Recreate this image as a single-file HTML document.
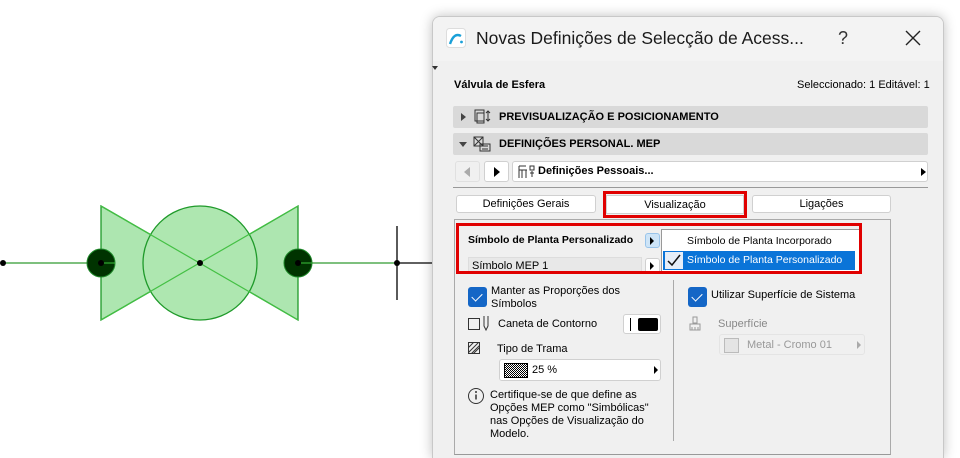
<!DOCTYPE html>
<html><head><meta charset="utf-8"><style>
*{box-sizing:border-box;margin:0;padding:0}
html,body{width:960px;height:458px;overflow:hidden}
body{background:#fff;font-family:"Liberation Sans","DejaVu Sans",sans-serif;font-size:11px;color:#000;position:relative}
.a{position:absolute;white-space:nowrap}
.dlg{position:absolute;left:432px;top:16px;width:512px;height:442px;background:#f0f0f0;border:1px solid #c8c8c8;border-bottom:none;border-radius:8px 8px 0 0;box-shadow:0 0 12px rgba(0,0,0,.25);overflow:hidden}
.bar{position:absolute;left:453px;width:475px;height:22px;background:#d9d9d9;border-radius:2px;font-weight:bold;font-size:11px;line-height:22px}
.btn{position:absolute;background:#fff;border:1px solid #d0d0d0;border-radius:3px}
.cb{position:absolute;width:19px;height:20px;background:#1466c6;border-radius:3px}
.cb:after{content:"";position:absolute;left:6px;top:4px;width:5px;height:9px;border:solid #fff;border-width:0 1.5px 1.5px 0;transform:rotate(45deg)}
.tri{position:absolute;width:0;height:0;border-top:4px solid transparent;border-bottom:4px solid transparent;border-left:5px solid #000}
</style></head><body>
<svg class="a" style="left:0;top:0" width="432" height="458">
<line x1="3" y1="263" x2="432" y2="263" stroke="#000" stroke-width="1.3"/>
<line x1="3" y1="263" x2="101" y2="263" stroke="#3cc03c" stroke-width="1"/>
<line x1="298" y1="263" x2="397" y2="263" stroke="#3cc03c" stroke-width="1"/>
<line x1="397" y1="226" x2="397" y2="300" stroke="#000" stroke-width="1.3"/>
<polygon points="101,206 200,263 101,320" fill="#ade6b0" stroke="#1f9a2a" stroke-width="1.3"/>
<polygon points="298,206 200,263 298,320" fill="#ade6b0" stroke="#1f9a2a" stroke-width="1.3"/>
<circle cx="200" cy="263" r="57" fill="#aee7b0" stroke="#1f9a2a" stroke-width="1.3"/>
<line x1="101" y1="206" x2="298" y2="320" stroke="#44c044" stroke-width="1.2"/>
<line x1="298" y1="206" x2="101" y2="320" stroke="#44c044" stroke-width="1.2"/>
<circle cx="101" cy="263" r="14" fill="#003300" stroke="#1f8a2a"/>
<circle cx="298" cy="263" r="14" fill="#003300" stroke="#1f8a2a"/>
<line x1="101" y1="263" x2="115" y2="263" stroke="#3cc03c"/>
<line x1="298" y1="263" x2="312" y2="263" stroke="#3cc03c"/>
<circle cx="3" cy="263" r="3"/><circle cx="101" cy="263" r="3"/><circle cx="200" cy="263" r="3"/><circle cx="298" cy="263" r="3"/><circle cx="397" cy="263" r="3"/>
</svg>
<div class="dlg"><div style="position:absolute;left:0;top:0;width:100%;height:44px;background:#f3f3f3"></div></div>
<svg class="a" style="left:446px;top:28px" width="20" height="20"><rect x="0.5" y="0.5" width="19" height="19" rx="3" fill="#fff" stroke="#ddd"/><path d="M4 16 Q8 4 15 8" stroke="#1aa0d8" stroke-width="2.4" fill="none"/><circle cx="15.5" cy="14" r="1.4" fill="#1aa0d8"/></svg>
<div class="a" style="left:476px;top:28px;font-size:17.5px;color:#1a1a1a">Novas Definições de Selecção de Acess...</div>
<div class="a" style="left:838px;top:28px;font-size:18px;color:#333">?</div>
<svg class="a" style="left:905px;top:30px" width="16" height="16"><path d="M1 1L15 15M15 1L1 15" stroke="#222" stroke-width="1.4"/></svg>
<div class="a" style="left:432px;top:66px;border-left:3px solid transparent;border-right:3px solid transparent;border-top:4px solid #333"></div>
<div class="a" style="left:454px;top:79px;font-weight:bold;font-size:11px">Válvula de Esfera</div>
<div class="a" style="left:797px;top:79px;font-size:11px">Seleccionado: 1 Editável: 1</div>
<div class="bar" style="top:106px"><span class="tri" style="left:8px;top:7px;border-left-color:#444"></span><svg class="a" style="left:20px;top:3px" width="18" height="16"><rect x="2" y="1" width="9" height="11" fill="none" stroke="#333"/><rect x="4" y="4" width="7" height="10" fill="none" stroke="#333"/><path d="M15 2v10M13 4l2-2 2 2M13 10l2 2 2-2" stroke="#333" fill="none"/></svg><span class="a" style="left:46px">PREVISUALIZAÇÃO E POSICIONAMENTO</span></div>
<div class="bar" style="top:133px"><span class="a" style="left:6px;top:9px;border-left:4px solid transparent;border-right:4px solid transparent;border-top:5px solid #444"></span><svg class="a" style="left:20px;top:3px" width="18" height="16"><rect x="1" y="1" width="9" height="9" fill="none" stroke="#333"/><path d="M1 1l9 9M10 1L1 10" stroke="#333"/><rect x="7" y="8" width="10" height="7" fill="none" stroke="#333"/><path d="M9 10h6M9 13h6" stroke="#333"/></svg><span class="a" style="left:46px">DEFINIÇÕES PERSONAL. MEP</span></div>
<div class="btn" style="left:455px;top:161px;width:25px;height:21px;background:#f0f0f0;border-color:#e0e0e0"><span class="a" style="left:8px;top:5px;border-top:5px solid transparent;border-bottom:5px solid transparent;border-right:6px solid #aaa"></span></div>
<div class="btn" style="left:484px;top:161px;width:25px;height:21px"><span class="a" style="left:9px;top:5px;border-top:5px solid transparent;border-bottom:5px solid transparent;border-left:6px solid #000"></span></div>
<div class="btn" style="left:512px;top:161px;width:416px;height:21px"><svg class="a" style="left:4px;top:2px" width="18" height="16"><path d="M2 2h7M2 2v12M5 6v8M9 6v8M2 6h8M13 2h4v4h-4zM13 9h4M15 7v6" stroke="#333" fill="none"/></svg><span class="a" style="left:25px;top:3px;font-weight:bold;font-size:11px">Definições Pessoais...</span><span class="tri" style="left:408px;top:6px"></span></div>
<div class="a" style="left:453px;top:187px;width:475px;height:1px;background:#999"></div>
<div class="btn" style="left:456px;top:195px;width:140px;height:18px;text-align:center;line-height:16px;font-size:11px">Definições Gerais</div>
<div class="btn" style="left:606px;top:195px;width:138px;height:19px;text-align:center;line-height:19px;font-size:11px;border-radius:0">Visualização</div>
<div class="a" style="left:603px;top:191px;width:144px;height:27px;border:3px solid #e00000"></div>
<div class="btn" style="left:752px;top:195px;width:139px;height:18px;text-align:center;line-height:16px;font-size:11px">Ligações</div>
<div class="a" style="left:454px;top:219px;width:437px;height:236px;border:1px solid #aaa;border-bottom-color:#999"></div>
<div class="a" style="left:468px;top:234px;font-weight:bold;font-size:10.5px">Símbolo de Planta Personalizado</div>
<div class="btn" style="left:645px;top:233px;width:15px;height:15px;background:#cde4f7;border-color:#99c4ea"><span class="tri" style="left:4px;top:3px;border-left-width:4px"></span></div>
<div class="a" style="left:468px;top:257px;width:174px;height:17px;background:#e8e8e8;border:1px solid #ddd;padding-left:3px;line-height:16px;font-size:11px">Símbolo MEP 1</div>
<div class="btn" style="left:645px;top:258px;width:15px;height:16px"><span class="tri" style="left:4px;top:3px;border-left-width:4px"></span></div>
<div class="a" style="left:661px;top:229px;width:200px;height:44px;background:#fff;border:1px solid #999"></div>
<div class="a" style="left:687px;top:235px;font-size:10.5px">Símbolo de Planta Incorporado</div>
<div class="a" style="left:663px;top:251px;width:192px;height:19px;background:#0a74d8"></div>
<svg class="a" style="left:665px;top:252px" width="18" height="17"><rect width="18" height="17" fill="#e6eef8"/><path d="M3 9l4 4 8-10" stroke="#111" stroke-width="1.5" fill="none"/></svg>
<div class="a" style="left:687px;top:254px;font-size:10.5px;color:#fff">Símbolo de Planta Personalizado</div>
<div class="a" style="left:456px;top:223px;width:406px;height:51px;border:3px solid #e00000"></div>
<div class="a" style="left:673px;top:280px;width:1px;height:161px;background:#aaa"></div>
<div class="cb" style="left:468px;top:287px"></div>
<div class="a" style="left:491px;top:285px;font-size:11px;line-height:13px">Manter as Proporções dos<br>Símbolos</div>
<div class="cb" style="left:688px;top:287px"></div>
<div class="a" style="left:711px;top:289px;font-size:11px">Utilizar Superfície de Sistema</div>
<svg class="a" style="left:467px;top:315px" width="28" height="18"><rect x="1.5" y="3.5" width="11" height="11" fill="none" stroke="#333"/><path d="M17 1v10l2 4 2-4V1" stroke="#333" fill="none"/></svg>
<div class="a" style="left:498px;top:318px;font-size:11px">Caneta de Contorno</div>
<div class="btn" style="left:623px;top:314px;width:38px;height:20px"><span class="a" style="left:6px;top:3px;width:1px;height:13px;background:#000"></span><span class="a" style="left:14px;top:3px;width:20px;height:13px;background:#000;border-radius:2px"></span></div>
<svg class="a" style="left:688px;top:316px" width="14" height="16"><path d="M5 1h4v6H5zM2 8h10v6H2zM4 14v-3M7 14v-3M10 14v-3" stroke="#999" fill="none"/></svg>
<div class="a" style="left:718px;top:318px;font-size:11px;color:#888">Superfície</div>
<div class="a" style="left:719px;top:334px;width:146px;height:21px;background:#f0f0f0;border:1px solid #e4e4e4;border-radius:3px"><span class="a" style="left:4px;top:3px;width:15px;height:15px;background:#e4e4e4;border:1px solid #bbb"></span><span class="a" style="left:27px;top:4px;font-size:11px;color:#999">Metal - Cromo 01</span><span class="tri" style="left:137px;top:6px;border-left-color:#aaa;border-left-width:4px"></span></div>
<svg class="a" style="left:468px;top:342px" width="12" height="12"><rect x="0.5" y="0.5" width="11" height="11" fill="none" stroke="#333"/><path d="M0 6L6 0M0 11L11 0M5 12L12 5M3 12l9-9" stroke="#333"/></svg>
<div class="a" style="left:497px;top:343px;font-size:11px">Tipo de Trama</div>
<div class="btn" style="left:499px;top:359px;width:162px;height:22px"><span class="a" style="left:4px;top:3px;width:24px;height:15px;border:1px solid #000;background:repeating-conic-gradient(#000 0 25%,#fff 0 50%) 0 0/2px 2px"></span><span class="a" style="left:32px;top:4px;font-size:11px">25 %</span><span class="tri" style="left:154px;top:6px;border-left-width:4px"></span></div>
<svg class="a" style="left:467px;top:387px" width="18" height="18"><circle cx="9" cy="9" r="7.5" fill="none" stroke="#333"/><path d="M9 7.5v5" stroke="#333" stroke-width="1.5"/><circle cx="9" cy="5" r="1" fill="#333"/></svg>
<div class="a" style="left:490px;top:389px;font-size:11px;line-height:13px">Certifique-se de que define as<br>Opções MEP como "Simbólicas"<br>nas Opções de Visualização do<br>Modelo.</div>
</body></html>
